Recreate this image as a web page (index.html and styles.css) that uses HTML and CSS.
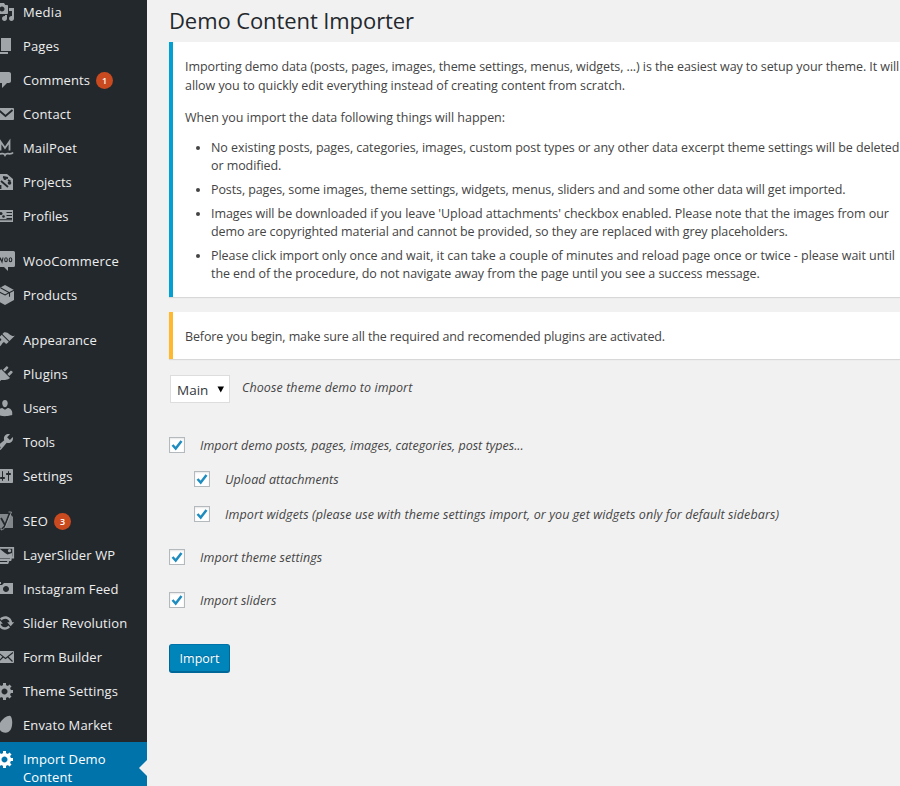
FILE: index.html
```html
<!DOCTYPE html>
<html lang="en">
<head>
<meta charset="utf-8">
<title>Demo Content Importer</title>
<link rel="stylesheet" href="styles.css">
</head>
<body>
<div class="layout">
<nav class="menu">
  <a class="item"><svg viewBox="0 0 20 20"><path d="M13 11V4c0-.55-.45-1-1-1h-1.670L9 1H5L3.670 3H2c-.55 0-1 .45-1 1v7c0 .55.45 1 1 1h10c.55 0 1-.45 1-1zM7 4.500c1.380 0 2.500 1.120 2.500 2.500S8.380 9.500 7 9.500 4.500 8.380 4.500 7 5.620 4.500 7 4.500zM14 6h5v10.500c0 1.380-1.120 2.500-2.500 2.500S14 17.880 14 16.500s1.120-2.500 2.500-2.500c.17 0 .34.020.5.050V9h-3V6zm-4 8.050V13h2v3.500c0 1.380-1.120 2.500-2.500 2.500S7 17.880 7 16.500 8.120 14 9.500 14c.17 0 .34.020.5.050z"/></svg><span class="s2">Media</span></a>
  <a class="item"><svg viewBox="0 0 20 20"><path d="M6 15V2h10v13H6zm-1 1h8v2H3V5h2v11z"/></svg><span>Pages</span></a>
  <a class="item"><svg viewBox="0 0 20 20"><path d="M5 2h9c1.100 0 2 .9 2 2v7c0 1.100-.9 2-2 2h-2l-5 5v-5H5c-1.100 0-2-.9-2-2V4c0-1.100.9-2 2-2z"/></svg><span>Comments</span><b class="badge">1</b></a>
  <a class="item"><svg viewBox="0 0 20 20"><path d="M3 4h15a1 1 0 0 1 1 1v10a1 1 0 0 1-1 1H3a1 1 0 0 1-1-1V5a1 1 0 0 1 1-1z"/><path class="cut" d="M3.500 6l7 6 7-6"/></svg><span class="s1">Contact</span></a>
  <a class="item"><svg viewBox="0 0 20 20"><path class="line" d="M5.500 12.500V3.500l4.500 6.500 4.500-6.500v9M2 14.500c1 1.500 3 1.500 5 1.200 1.500-.2 2.500.3 3 1.300.5-1 1.500-1.500 3-1.300 2 .3 4 .3 5-1.200"/></svg><span>MailPoet</span></a>
  <a class="item"><svg viewBox="0 0 20 20"><path d="M2 2h10l6 5v11H5V7H2z"/><path class="cut" d="M8 5l5 1M6 9l7 6M5.500 13v4M13 8l2.500 1.500"/><circle class="hole" cx="14.500" cy="11" r="1.800"/><circle class="hole" cx="10" cy="6.500" r="1.500"/></svg><span class="s0">Projects</span></a>
  <a class="item"><svg viewBox="0 0 20 20"><path d="M1 4h17v12H1z"/><path class="thin" d="M11.500 6.500H17M11.500 9.500H17M11.500 12.500H17M3 13.800h14"/><circle class="hole" cx="6" cy="7.500" r="1.500"/><circle class="hole" cx="8.500" cy="10.500" r="1.300"/></svg><span class="s0">Profiles</span></a>
  <hr>
  <a class="item"><svg viewBox="0 0 20 20"><path d="M0 0h18.500a1.500 1.500 0 0 1 1.500 1.500v13a1.500 1.500 0 0 1-1.500 1.500H13v4l-4-4H0z"/><path class="thin" d="M3 6.500l1 4.500 1.500-3.500L7 11l1-4.500"/><ellipse class="thin" cx="11" cy="8.700" rx="1.300" ry="2"/><ellipse class="thin" cx="15.500" cy="8.700" rx="1.300" ry="2"/></svg><span class="s1">WooCommerce</span></a>
  <a class="item"><svg viewBox="0 0 20 20"><path d="M10 0l9 5v10l-9 5-9-5V5z"/><path class="thin" d="M1 5.200l9 4.800 9-4.800M10 10l.5-.3M5.500 2.700l9 5v4"/></svg><span class="s0">Products</span></a>
  <hr>
  <a class="item"><svg viewBox="0 0 20 20"><path d="M14.480 11.060L7.410 3.990l1.500-1.500c.5-.56 2.300-.47 3.510.32 1.210.8 1.430 1.280 2.910 2.100 1.180.64 2.450 1.260 4.450.85zm-.71.710L6.700 4.700 4.930 6.470c-.39.39-.39 1.020 0 1.410l1.060 1.060c.39.39.39 1.030 0 1.420-.6.6-1.430 1.110-2.210 1.690-.35.26-.7.53-1.010.84C1.430 14.230.4 16.080 1.400 17.070c.99 1 2.840-.03 4.180-1.360.31-.31.58-.66.85-1.020.57-.78 1.080-1.610 1.690-2.210.39-.39 1.020-.39 1.410 0l1.060 1.060c.39.39 1.020.39 1.410 0z"/></svg><span>Appearance</span></a>
  <a class="item"><svg viewBox="0 0 20 20"><path d="M13.110 4.360L9.870 7.600 8 5.730l3.240-3.240c.35-.34 1.050-.2 1.560.32.52.51.66 1.210.31 1.550zm-8 1.770l.91-1.120 9.010 9.010-1.190.84c-.71.71-2.630 1.160-3.820 1.160H6.140L4.900 17.260c-.59.59-1.540.59-2.120 0-.59-.58-.59-1.530 0-2.120l1.240-1.240v-3.880c0-1.130.4-3.190 1.090-3.890zm7.260 3.970l3.240-3.240c.34-.35 1.040-.21 1.550.31.52.51.66 1.210.31 1.550l-3.240 3.250z"/></svg><span class="s1">Plugins</span></a>
  <a class="item"><svg viewBox="0 0 20 20"><path d="M10 9.250c-2.270 0-2.730-3.440-2.730-3.440C7 4.020 7.820 2 9.970 2c2.160 0 2.980 2.020 2.710 3.810 0 0-.41 3.440-2.680 3.440zm0 2.570L12.720 10c2.390 0 4.520 2.330 4.520 4.530v2.490s-3.650 1.130-7.240 1.130c-3.650 0-7.240-1.130-7.240-1.130v-2.490c0-2.250 1.940-4.480 4.470-4.480z"/></svg><span class="sn">Users</span></a>
  <a class="item"><svg viewBox="0 0 20 20"><path d="M16.680 9.770c-1.340 1.340-3.300 1.670-4.950.99l-5.410 6.520c-.99.99-2.590.99-3.580 0s-.99-2.590 0-3.570l6.520-5.420c-.68-1.650-.35-3.610.99-4.950 1.280-1.280 3.120-1.620 4.720-1.060l-2.890 2.890 2.820 2.820 2.860-2.870c.53 1.580.18 3.390-1.080 4.650zM3.810 16.210c.4.39 1.040.39 1.430 0 .4-.4.4-1.040 0-1.430-.39-.4-1.030-.4-1.430 0-.39.39-.39 1.030 0 1.430z"/></svg><span class="sn">Tools</span></a>
  <a class="item"><svg viewBox="0 0 20 20"><path d="M18 16V4c0-.55-.45-1-1-1H3c-.55 0-1 .45-1 1v12c0 .55.45 1 1 1h14c.55 0 1-.45 1-1zM8 11h1c.55 0 1 .45 1 1s-.45 1-1 1H8v1.500c0 .28-.22.5-.5.5s-.5-.22-.5-.5V13H6c-.55 0-1-.45-1-1s.45-1 1-1h1V5.500c0-.28.22-.5.5-.5s.5.220.5.500V11zm5-2h-1c-.55 0-1-.45-1-1s.45-1 1-1h1V5.500c0-.28.22-.5.5-.5s.5.220.5.500V7h1c.55 0 1 .45 1 1s-.45 1-1 1h-1v5.500c0 .28-.22.5-.5.5s-.5-.22-.5-.5V9z"/></svg><span class="s1">Settings</span></a>
  <hr>
  <a class="item"><svg viewBox="0 0 20 20"><path class="dim" d="M3 3h12l3 3v11H3z"/><path class="cut" d="M15.500 0L10.500 13c-1 3-2.500 5-5 5.300M6 7l4 7"/><path class="wire" d="M13.500 1h3L11 14.500c-1 2.800-2.500 4-5 4.500v-2"/></svg><span class="s1">SEO</span><b class="badge">3</b></a>
  <a class="item"><svg viewBox="0 0 20 20"><path class="line" d="M4 2.800h14.200v9.700H4zM2 15h13.500l.5-1.500M1 18h11.500l1-2"/><path d="M5 4l5 4 2.500 1.500L17 8v4H5z"/><circle cx="14.500" cy="5.700" r="1.600"/></svg><span>LayerSlider WP</span></a>
  <a class="item"><svg viewBox="0 0 20 20"><path d="M6 5V3H3v2h3zm12 10V4H9L7 6H2v9h16zm-7-8c1.660 0 3 1.340 3 3s-1.340 3-3 3-3-1.340-3-3 1.340-3 3-3z"/></svg><span>Instagram Feed</span></a>
  <a class="item"><svg viewBox="0 0 20 20"><path d="M10.200 3.280c3.530 0 6.430 2.610 6.920 6h2.080l-3.500 4-3.500-4h2.320c-.45-1.970-2.210-3.450-4.320-3.450-1.450 0-2.730.71-3.540 1.780L4.950 5.660C6.230 4.200 8.110 3.280 10.200 3.280zm-.4 13.440c-3.520 0-6.430-2.610-6.920-6H.8l3.500-4c1.170 1.330 2.330 2.670 3.500 4H5.480c.45 1.970 2.210 3.450 4.320 3.450 1.450 0 2.730-.71 3.540-1.780l1.710 1.950c-1.280 1.460-3.150 2.380-5.250 2.380z"/></svg><span>Slider Revolution</span></a>
  <a class="item"><svg viewBox="0 0 20 20"><path d="M3 4h15a1 1 0 0 1 1 1v10a1 1 0 0 1-1 1H3a1 1 0 0 1-1-1V5a1 1 0 0 1 1-1z"/><path class="thin" d="M3 5.500l7.500 6 7.500-6M3.500 14.500L8 10M17.500 14.500L13 10"/></svg><span class="s0">Form Builder</span></a>
  <a class="item"><svg viewBox="0 0 20 20"><path d="M18 12h-2.180c-.17.700-.44 1.350-.81 1.930l1.540 1.540-2.100 2.100-1.540-1.540c-.58.36-1.230.63-1.910.79V19H8v-2.180c-.68-.16-1.330-.43-1.910-.79l-1.540 1.540-2.120-2.120 1.540-1.540c-.36-.58-.63-1.230-.79-1.910H1V9.030h2.170c.16-.7.44-1.350.8-1.940L2.430 5.550l2.100-2.100 1.540 1.540c.58-.37 1.240-.64 1.930-.81V2h3v2.180c.68.16 1.330.43 1.910.79l1.540-1.540 2.120 2.120-1.540 1.540c.36.59.64 1.240.8 1.940H18V12zm-8.500 1.500c1.660 0 3-1.340 3-3s-1.340-3-3-3-3 1.340-3 3 1.340 3 3 3z"/></svg><span>Theme Settings</span></a>
  <a class="item"><svg viewBox="0 0 20 20"><path d="M15.200.9c1 .3 2 2.600 2 6.600 0 6-2.500 10.300-6.700 10.300C7 17.800 4 15.500 4 11.500 4 6 12 0 15.200.9z"/></svg><span>Envato Market</span></a>
  <a class="item current"><svg viewBox="0 0 20 20"><path d="M18 12h-2.180c-.17.700-.44 1.350-.81 1.930l1.540 1.540-2.100 2.100-1.540-1.540c-.58.36-1.230.63-1.910.79V19H8v-2.180c-.68-.16-1.330-.43-1.910-.79l-1.540 1.540-2.120-2.120 1.540-1.540c-.36-.58-.63-1.230-.79-1.910H1V9.030h2.170c.16-.7.44-1.350.8-1.940L2.430 5.550l2.100-2.100 1.540 1.540c.58-.37 1.240-.64 1.930-.81V2h3v2.180c.68.16 1.330.43 1.910.79l1.540-1.540 2.120 2.120-1.540 1.540c.36.59.64 1.240.8 1.940H18V12zm-8.500 1.500c1.660 0 3-1.340 3-3s-1.340-3-3-3-3 1.340-3 3 1.340 3 3 3z"/></svg><span>Import Demo<br>Content</span></a>
</nav>
<main class="content">
  <h1>Demo Content Importer</h1>
  <section class="notice info">
    <p><span class="l1">Importing demo data (posts, pages, images, theme settings, menus, widgets, ...) is the easiest way to setup your theme. It will</span><br><span class="l2">allow you to quickly edit everything instead of creating content from scratch.</span></p>
    <p class="l3">When you import the data following things will happen:</p>
    <ul>
      <li><span class="l4">No existing posts, pages, categories, images, custom post types or any other data excerpt theme settings will be deleted</span><br>or modified.</li>
      <li class="l5">Posts, pages, some images, theme settings, widgets, menus, sliders and and some other data will get imported.</li>
      <li><span class="l4">Images will be downloaded if you leave 'Upload attachments' checkbox enabled. Please note that the images from our</span><br><span class="l1">demo are copyrighted material and cannot be provided, so they are replaced with grey placeholders.</span></li>
      <li><span class="l6">Please click import only once and wait, it can take a couple of minutes and reload page once or twice - please wait until</span><br><span class="l4">the end of the procedure, do not navigate away from the page until you see a success message.</span></li>
    </ul>
  </section>
  <section class="notice warning"><p class="l7">Before you begin, make sure all the required and recomended plugins are activated.</p></section>
  <div class="chooser">
    <div class="select">Main<svg viewBox="0 0 8 7"><path d="M.5.500h6.500L3.750 6.500z"/></svg></div>
    <em class="e1">Choose theme demo to import</em>
  </div>
  <label class="check"><i class="box"><svg viewBox="0 0 14 14"><path d="M2.500 7l3.200 3.500L11.500 3"/></svg></i><em>Import demo posts, pages, images, categories, post types...</em></label>
  <label class="check sub first"><i class="box"><svg viewBox="0 0 14 14"><path d="M2.500 7l3.200 3.500L11.500 3"/></svg></i><em class="e2">Upload attachments</em></label>
  <label class="check sub"><i class="box"><svg viewBox="0 0 14 14"><path d="M2.500 7l3.200 3.500L11.500 3"/></svg></i><em class="e1">Import widgets (please use with theme settings import, or you get widgets only for default sidebars)</em></label>
  <label class="check"><i class="box"><svg viewBox="0 0 14 14"><path d="M2.500 7l3.200 3.500L11.500 3"/></svg></i><em class="e2">Import theme settings</em></label>
  <label class="check"><i class="box"><svg viewBox="0 0 14 14"><path d="M2.500 7l3.200 3.500L11.500 3"/></svg></i><em>Import sliders</em></label>
  <button class="primary">Import</button>
</main>
</div>
</body>
</html>
```
FILE: styles.css
```css
* { box-sizing: border-box; }
body {
  margin: 0;
  background: #f1f1f1;
  color: #444;
  font: 12.5px/19px "Open Sans", "Noto Sans", sans-serif;
}
.layout { display: flex; height: 786px; overflow: hidden; }

/* Sidebar menu */
.menu {
  width: 147px;
  flex: none;
  margin-top: -5px;
  background: #23282d;
  overflow: hidden;
}
.item {
  display: flex;
  align-items: flex-start;
  height: 34px;
  padding-top: 8px;
  font-size: 13px;
  line-height: 18px;
  letter-spacing: .12px;
  color: #eee;
  white-space: nowrap;
}
.item svg {
  width: 20px;
  height: 20px;
  flex: none;
  margin: -1px 8px 0 -5px;
  fill: #a0a5aa;
}
.menu hr { border: 0; margin: 0; height: 11px; }
.s0 { letter-spacing: .02px; }
.s1 { letter-spacing: .19px; }
.s2 { letter-spacing: .3px; }
.sn { letter-spacing: -.08px; }
.item .cut { fill: none; stroke: #23282d; stroke-width: 1.800; }
.item .thin { fill: none; stroke: #23282d; stroke-width: 1.100; }
.item .line { fill: none; stroke: #a0a5aa; stroke-width: 1.800; }
.item .wire { fill: none; stroke: #a0a5aa; stroke-width: .8; }
.item .hole { fill: #23282d; }
.item .dim { fill: #82878c; }
.badge {
  width: 17px;
  height: 17px;
  margin: 1px 0 0 6px;
  border-radius: 50%;
  background: #ca4a1f;
  color: #fff;
  font-size: 9px;
  font-weight: 600;
  line-height: 17px;
  letter-spacing: 0;
  text-align: center;
}
.current {
  position: relative;
  height: 60px;
  background: #0073aa;
  color: #fff;
}
.current svg { fill: #fff; }
.current::after {
  content: "";
  position: absolute;
  right: 0;
  top: 18px;
  border: 8px solid transparent;
  border-left: 0;
  border-right-color: #f1f1f1;
}

/* Page content */
.content { flex: none; width: 753px; padding-left: 22px; white-space: nowrap; }
h1 {
  margin: 0;
  padding-top: 5px;
  height: 42px;
  color: #23282d;
  font-size: 22px;
  font-weight: 400;
  line-height: 30px;
  letter-spacing: -.09px;
}
.notice {
  margin-right: -20px;
  padding: 2px 12px;
  background: #fff;
  border-left: 4px solid #00a0d2;
  box-shadow: 0 1px 1px rgba(0, 0, 0, .1);
}
.notice p { margin: 0 0 13px; }
.info { height: 255px; padding-top: 15px; }
.warning { height: 47px; margin-top: 15px; padding-top: 15px; border-color: #ffb92f; }
.notice ul { margin: -1px 0 0; padding-left: 26px; line-height: 18px; }
.notice li { margin-bottom: 6px; letter-spacing: -.07px; }
.notice .l1 { letter-spacing: -.085px; }
.notice .l2 { letter-spacing: -.051px; }
.notice .l3 { letter-spacing: -.027px; }
.notice .l4 { letter-spacing: -.067px; }
.notice .l5 { letter-spacing: -.102px; }
.notice .l6 { letter-spacing: -.04px; }
.notice .l7 { letter-spacing: -.112px; }

/* Form */
.chooser { display: flex; height: 78px; padding-top: 16px; }
.chooser em { margin: 3px 0 0 12px; }
.select {
  display: flex;
  width: 60px;
  height: 28px;
  margin-left: 1px;
  padding-left: 6px;
  background: #fff;
  border: 1px solid #ddd;
  color: #32373c;
  font-size: 13.500px;
  line-height: 28px;
}
.select svg { width: 8px; height: 7px; margin: 10px 0 0 9px; }
.check { display: flex; height: 16px; margin-bottom: 27px; }
.check em { margin: -1px 0 0 15px; }
.check.sub { margin-left: 25px; }
.check.first { margin-top: -9px; margin-bottom: 19px; }
em { letter-spacing: .01px; }
.e1 { letter-spacing: .095px; }
.e2 { letter-spacing: .065px; }
.box {
  width: 16px;
  height: 16px;
  background: #fff;
  border: 1px solid #b4b9be;
  box-shadow: inset 0 1px 2px rgba(0, 0, 0, .1);
}
.box svg { display: block; fill: none; stroke: #1e8cbe; stroke-width: 2.500; }
.primary {
  display: block;
  width: 61px;
  height: 29px;
  margin-top: 36px;
  padding: 0;
  background: #0085ba;
  border: 1px solid;
  border-color: #0073aa #006799 #006799;
  border-radius: 3px;
  box-shadow: inset 0 -1px 0 #006799;
  color: #fff;
  font: 12.5px/26px "Open Sans", sans-serif;
  text-shadow: 0 -1px 1px #006799;
}
```
